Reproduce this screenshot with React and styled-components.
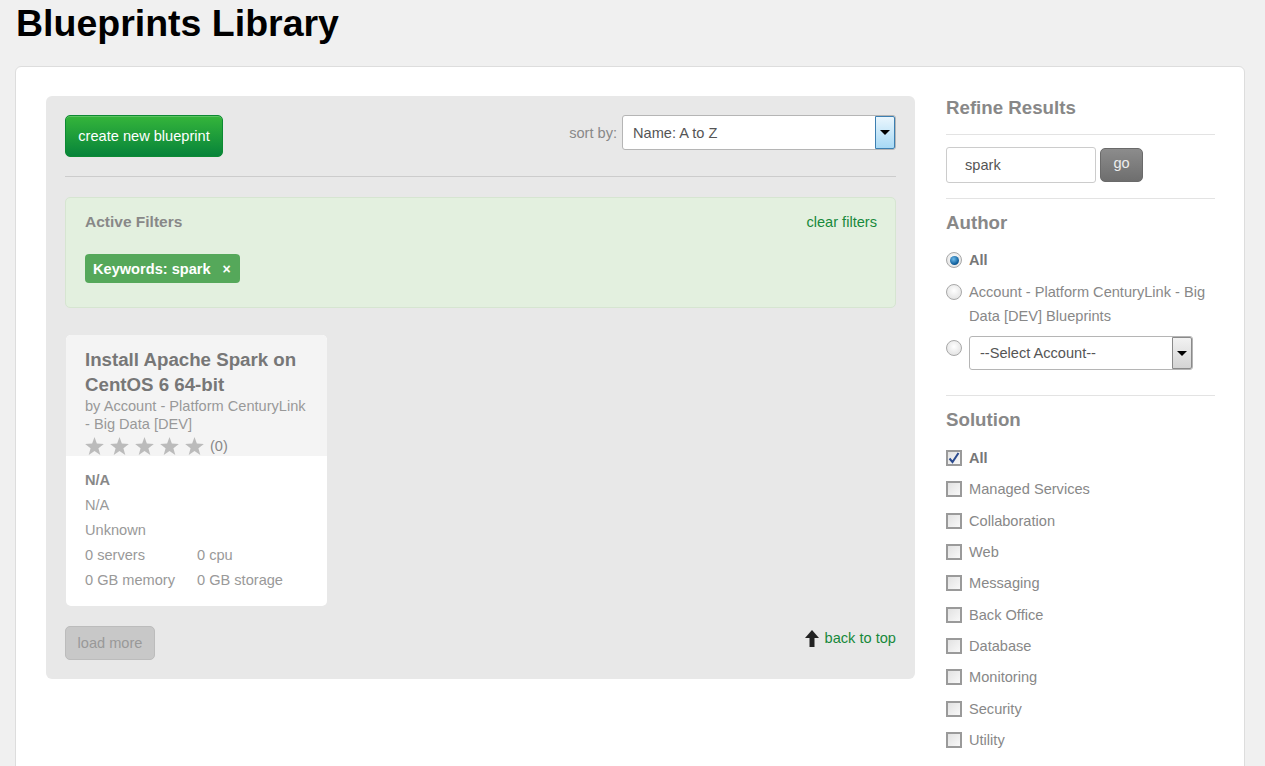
import React from 'react';
import styled, { createGlobalStyle } from 'styled-components';

const GlobalStyle = createGlobalStyle`
  body {
    margin: 0;
    background: #f0f0f0;
    font-family: "Liberation Sans", Arial, sans-serif;
    font-size: 14.6px;
    color: #888;
  }
`;

const Title = styled.h1`
  margin: 0;
  padding: 1px 16px 0;
  font-size: 37.5px;
  line-height: 44px;
  font-weight: bold;
  color: #000;
`;

const Panel = styled.div`
  margin: 21px 20px 0 15px;
  background: #fff;
  border: 1px solid #ddd;
  border-radius: 6px;
  padding: 29px 29px 30px 30px;
  display: flex;
  gap: 31px;
  align-items: flex-start;
`;

const Main = styled.div`
  width: 869px;
  box-sizing: border-box;
  background: #e8e8e8;
  border-radius: 6px;
  padding: 19px;
`;

const Toolbar = styled.div`
  display: flex;
  justify-content: space-between;
  align-items: flex-start;
`;

const GreenButton = styled.button`
  height: 42px;
  width: 158px;
  border: 1px solid #0d8a33;
  border-radius: 5px;
  background: linear-gradient(#35b53b, #07843a);
  color: #fff;
  font-family: inherit;
  font-size: 14.6px;
  padding: 0;
  box-shadow: inset 0 1px 0 rgba(255, 255, 255, 0.2);
`;

const SortWrap = styled.div`
  display: flex;
  align-items: center;
  gap: 5px;
  height: 35px;
`;

const SortLabel = styled.span`
  color: #888;
`;

const SelectBox = styled.div`
  width: ${(p) => p.$width}px;
  height: ${(p) => p.$height}px;
  box-sizing: border-box;
  border: 1px solid #b5b5b5;
  border-radius: 3px;
  background: #fff;
  display: flex;
  align-items: stretch;
  justify-content: space-between;
  color: #555;
  font-weight: normal;
`;

const SelectText = styled.span`
  display: flex;
  align-items: center;
  padding-left: 10px;
`;

const SelectArrow = styled.span`
  width: 20px;
  box-sizing: border-box;
  display: flex;
  align-items: center;
  justify-content: center;
  border: 1px solid ${(p) => (p.$blue ? '#3c7fb1' : '#8a8a8a')};
  border-radius: 0 2px 2px 0;
  background: ${(p) =>
    p.$blue ? 'linear-gradient(#eaf6fd, #a7d9f5)' : 'linear-gradient(#f2f2f2, #d4d4d4)'};
  &::after {
    content: '';
    border-left: 5px solid transparent;
    border-right: 5px solid transparent;
    border-top: 5px solid #000;
  }
`;

const Divider = styled.div`
  height: 1px;
  background: #ccc;
  margin: 19px 0 20px;
`;

const FilterBox = styled.div`
  background: #e3f0df;
  border: 1px solid #d6e5d1;
  border-radius: 5px;
  padding: 14px 18px 24px 19px;
`;

const FilterHead = styled.div`
  display: flex;
  justify-content: space-between;
  line-height: 20px;
`;

const BoldLabel = styled.span`
  font-weight: bold;
  font-size: 15.5px;
  color: #888;
`;

const GreenLink = styled.a`
  color: #17893b;
  text-decoration: none;
`;

const Tag = styled.span`
  display: inline-flex;
  align-items: center;
  gap: 12px;
  margin-top: 22px;
  height: 29px;
  padding: 0 9px 0 8px;
  background: #55a85a;
  border-radius: 4px;
  color: #fff;
  font-weight: bold;
`;

const TagX = styled.span`
  font-size: 14px;
`;

const Card = styled.div`
  width: 261px;
  margin: 27px 0 0 1px;
  background: #fff;
  border-radius: 5px;
  overflow: hidden;
`;

const CardTop = styled.div`
  background: #f4f4f4;
  padding: 12px 19px 0;
  height: 121px;
  box-sizing: border-box;
`;

const CardTitle = styled.div`
  font-size: 18.7px;
  font-weight: bold;
  line-height: 25px;
  color: #777;
`;

const Byline = styled.div`
  color: #999;
  line-height: 18px;
`;

const Stars = styled.div`
  display: flex;
  align-items: center;
  gap: 6px;
  height: 22px;
  margin-top: 2px;
  color: #888;
`;

const CardBody = styled.div`
  padding: 12px 19px 13px;
  line-height: 25px;
  color: #999;
`;

const Strong = styled.div`
  font-weight: bold;
  color: #888;
`;

const Specs = styled.div`
  display: grid;
  grid-template-columns: 112px auto;
`;

const Footer = styled.div`
  display: flex;
  justify-content: space-between;
  align-items: flex-start;
  margin-top: 20px;
`;

const GrayButton = styled.button`
  height: 34px;
  width: 90px;
  border: 1px solid #bcbcbc;
  border-radius: 5px;
  background: #c8c8c8;
  color: #999;
  font-family: inherit;
  font-size: 14.6px;
  padding: 0;
`;

const BackTop = styled.a`
  display: flex;
  align-items: center;
  gap: 6px;
  line-height: 24px;
  color: #17893b;
  text-decoration: none;
`;

const Sidebar = styled.div`
  width: 269px;
`;

const Section = styled.div`
  border-bottom: ${(p) => (p.$last ? 'none' : '1px solid #e3e3e3')};
  padding-bottom: ${(p) => p.$pb}px;
  margin-bottom: 12px;
`;

const Heading = styled.h3`
  margin: 0;
  font-size: 18.7px;
  line-height: 24px;
  font-weight: bold;
  color: #888;
`;

const SearchRow = styled.div`
  display: flex;
  gap: 4px;
  align-items: center;
`;

const SearchInput = styled.div`
  width: 150px;
  height: 36px;
  box-sizing: border-box;
  border: 1px solid #ccc;
  border-radius: 3px;
  padding-left: 18px;
  display: flex;
  align-items: center;
  color: #555;
`;

const GoButton = styled.button`
  width: 43px;
  height: 34px;
  border: 1px solid #6a6a6a;
  border-radius: 5px;
  background: linear-gradient(#8c8c8c, #6e6e6e);
  color: #eee;
  font-family: inherit;
  font-size: 14.6px;
  padding: 0 0 4px;
`;

const OptionList = styled.div`
  display: flex;
  flex-direction: column;
  gap: ${(p) => p.$gap}px;
  margin-top: ${(p) => p.$mt}px;
`;

const Option = styled.label`
  display: flex;
  align-items: flex-start;
  gap: 7px;
  line-height: 24px;
  color: ${(p) => (p.$bold ? '#777' : '#888')};
  font-weight: ${(p) => (p.$bold ? 'bold' : 'normal')};
`;

const Radio = styled.span`
  flex: none;
  width: 16px;
  height: 16px;
  margin-top: 4px;
  box-sizing: border-box;
  border-radius: 50%;
  border: 1px solid #a8a8a8;
  background: radial-gradient(circle at 50% 40%, #fff, #dcdcdc);
  display: flex;
  align-items: center;
  justify-content: center;
  &::after {
    content: '';
    display: ${(p) => (p.$checked ? 'block' : 'none')};
    width: 9px;
    height: 9px;
    border-radius: 50%;
    background: radial-gradient(circle at 40% 35%, #6fbcec, #0d5d9a 65%, #083c68);
  }
`;

const Check = styled.span`
  flex: none;
  width: 16px;
  height: 16px;
  margin-top: 4px;
  box-sizing: border-box;
  border: 2px solid #9a9a9a;
  background: linear-gradient(135deg, #e2e2e2, #f8f8f8);
  display: flex;
  align-items: center;
  justify-content: center;
`;

const StarIcon = () => (
  <svg width="19" height="18" viewBox="0 0 24 23">
    <polygon
      points="12,0 15,8.3 24,8.8 17,14.4 19.4,23 12,18 4.6,23 7,14.4 0,8.8 9,8.3"
      fill="#bbb"
    />
  </svg>
);

const solutions = [
  'Managed Services',
  'Collaboration',
  'Web',
  'Messaging',
  'Back Office',
  'Database',
  'Monitoring',
  'Security',
  'Utility',
];

const App = () => {
  return (
    <>
      <GlobalStyle />
      <Title>Blueprints Library</Title>
      <Panel>
        <Main>
          <Toolbar>
            <GreenButton>create new blueprint</GreenButton>
            <SortWrap>
              <SortLabel>sort by:</SortLabel>
              <SelectBox $width={274} $height={35}>
                <SelectText>Name: A to Z</SelectText>
                <SelectArrow $blue />
              </SelectBox>
            </SortWrap>
          </Toolbar>
          <Divider />
          <FilterBox>
            <FilterHead>
              <BoldLabel>Active Filters</BoldLabel>
              <GreenLink href="#">clear filters</GreenLink>
            </FilterHead>
            <Tag>
              Keywords: spark <TagX>×</TagX>
            </Tag>
          </FilterBox>
          <Card>
            <CardTop>
              <CardTitle>Install Apache Spark on CentOS 6 64-bit</CardTitle>
              <Byline>by Account - Platform CenturyLink - Big Data [DEV]</Byline>
              <Stars>
                <StarIcon />
                <StarIcon />
                <StarIcon />
                <StarIcon />
                <StarIcon />
                <span>(0)</span>
              </Stars>
            </CardTop>
            <CardBody>
              <Strong>N/A</Strong>
              <div>N/A</div>
              <div>Unknown</div>
              <Specs>
                <span>0 servers</span>
                <span>0 cpu</span>
                <span>0 GB memory</span>
                <span>0 GB storage</span>
              </Specs>
            </CardBody>
          </Card>
          <Footer>
            <GrayButton>load more</GrayButton>
            <BackTop href="#">
              <svg width="14" height="17" viewBox="0 0 14 17">
                <path d="M7 0 L14 8 H9.5 V17 H4.5 V8 H0 Z" fill="#222" />
              </svg>
              back to top
            </BackTop>
          </Footer>
        </Main>
        <Sidebar>
          <Section $pb={14}>
            <Heading>Refine Results</Heading>
          </Section>
          <Section $pb={15}>
            <SearchRow>
              <SearchInput>spark</SearchInput>
              <GoButton>go</GoButton>
            </SearchRow>
          </Section>
          <Section $pb={25}>
            <Heading>Author</Heading>
            <OptionList $gap={8} $mt={13}>
              <Option $bold>
                <Radio $checked />
                All
              </Option>
              <Option>
                <Radio />
                Account - Platform CenturyLink - Big Data [DEV] Blueprints
              </Option>
              <Option>
                <Radio />
                <SelectBox $width={224} $height={34}>
                  <SelectText>--Select Account--</SelectText>
                  <SelectArrow />
                </SelectBox>
              </Option>
            </OptionList>
          </Section>
          <Section $last $pb={0}>
            <Heading>Solution</Heading>
            <OptionList $gap={7.33} $mt={14}>
              <Option $bold>
                <Check>
                  <svg width="12" height="12" viewBox="0 0 12 12">
                    <path
                      d="M1.5 6.5 L4.5 10 L10.5 1"
                      stroke="#2b4a8e"
                      strokeWidth="2"
                      fill="none"
                    />
                  </svg>
                </Check>
                All
              </Option>
              {solutions.map((s) => (
                <Option key={s}>
                  <Check />
                  {s}
                </Option>
              ))}
            </OptionList>
          </Section>
        </Sidebar>
      </Panel>
    </>
  );
};

export default App;
